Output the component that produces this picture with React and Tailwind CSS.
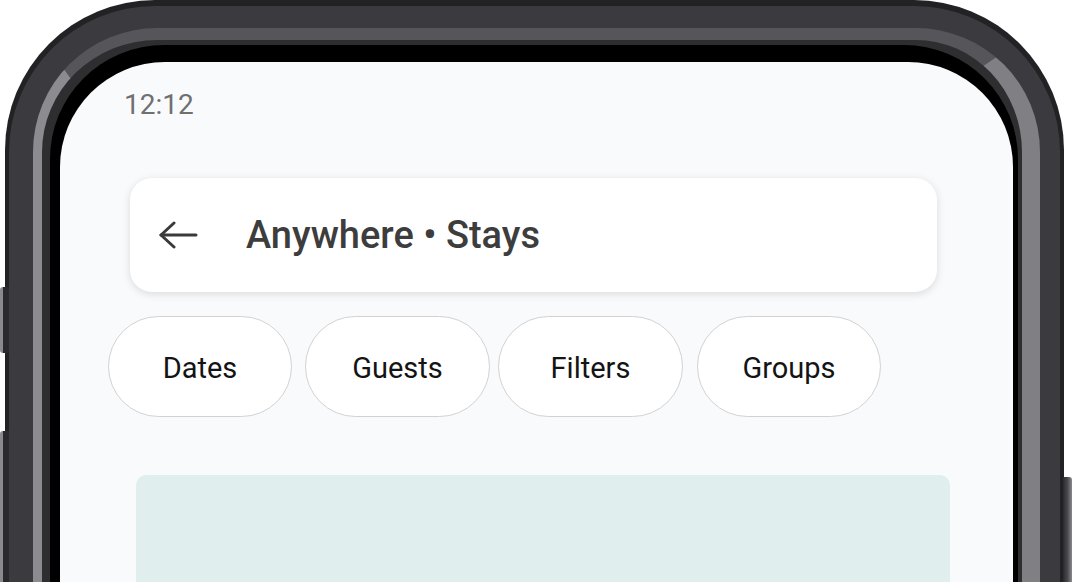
const chips = [
  { label: 'Dates', w: 'w-[184px]', ml: 'ml-0' },
  { label: 'Guests', w: 'w-[185px]', ml: 'ml-[13px]' },
  { label: 'Filters', w: 'w-[185px]', ml: 'ml-[8px]' },
  { label: 'Groups', w: 'w-[184px]', ml: 'ml-[14px]' },
]

function BackArrow() {
  return (
    <svg width="40" height="30" viewBox="0 0 40 30" fill="none" stroke="#3a3a3a" strokeWidth="3" strokeLinecap="round" strokeLinejoin="round">
      <path d="M2 15H37" />
      <path d="M15 3L2 15L15 27" />
    </svg>
  )
}

export default function App() {
  return (
    <div className="relative h-[582px] w-[1072px] overflow-hidden bg-white" style={{ fontFamily: 'Roboto, "Noto Sans", sans-serif' }}>
      {/* side buttons */}
      <div className="absolute left-0 top-[287px] h-[66px] w-[9px] rounded-l-[3px] bg-[linear-gradient(90deg,#8a8a8e_0%,#8a8a8e_30%,#2a2a2e_31%)]" />
      <div className="absolute left-0 top-[431px] h-[200px] w-[9px] rounded-l-[3px] bg-[linear-gradient(90deg,#8a8a8e_0%,#8a8a8e_30%,#2a2a2e_31%)]" />
      <div className="absolute right-0 top-[477px] h-[200px] w-[9px] rounded-r-[3px] bg-[linear-gradient(90deg,#2a2a2e_0%,#4a4a4e_50%,#8a8a8e_100%)]" />

      {/* phone frame */}
      <div className="ml-[5px] h-[1000px] w-[1059px] rounded-[150px] bg-[#222225] pl-[4px] pr-[4px] pt-[6px]">
        <div className="h-full rounded-[146px] bg-[#3b3b3f] pl-[24px] pr-[20px] pt-[22px]">
          <div className="h-full rounded-[124px] border-b-0 border-l-[9px] border-r-[18px] border-t-[12px] border-l-[#8c8c90] border-r-[#808084] border-t-[#56565a] bg-[#2e2e31] pl-[8px] pr-[4px] pt-[5px]">
            <div className="h-full rounded-[114px] bg-black pl-[10px] pr-[5px] pt-[17px]">
              {/* screen */}
              <div className="flex h-full flex-col rounded-[105px] bg-[#f9fafc] pt-[27px]">
                <div className="pl-[64px] text-[28px] leading-[32px] text-[#707070]">12:12</div>

                <div className="ml-[70px] mt-[57px] flex h-[114px] w-[807px] items-center rounded-[22px] bg-white pl-[29px] shadow-[0_2px_8px_rgba(0,0,0,0.13)]">
                  <BackArrow />
                  <span className="ml-[47px] text-[38px] font-medium leading-none text-[#3d3d3d]">Anywhere • Stays</span>
                </div>

                <div className="ml-[48px] mt-[24px] flex">
                  {chips.map((c) => (
                    <div
                      key={c.label}
                      className={`${c.w} ${c.ml} flex h-[101px] items-center justify-center rounded-full border border-[#d2d2d2] bg-white pt-[4px] text-[29px] text-[#141414]`}
                    >
                      {c.label}
                    </div>
                  ))}
                </div>

                <div className="ml-[76px] mt-[58px] h-[300px] w-[814px] rounded-[10px] bg-[#e0efed]" />
              </div>
            </div>
          </div>
        </div>
      </div>
    </div>
  )
}
